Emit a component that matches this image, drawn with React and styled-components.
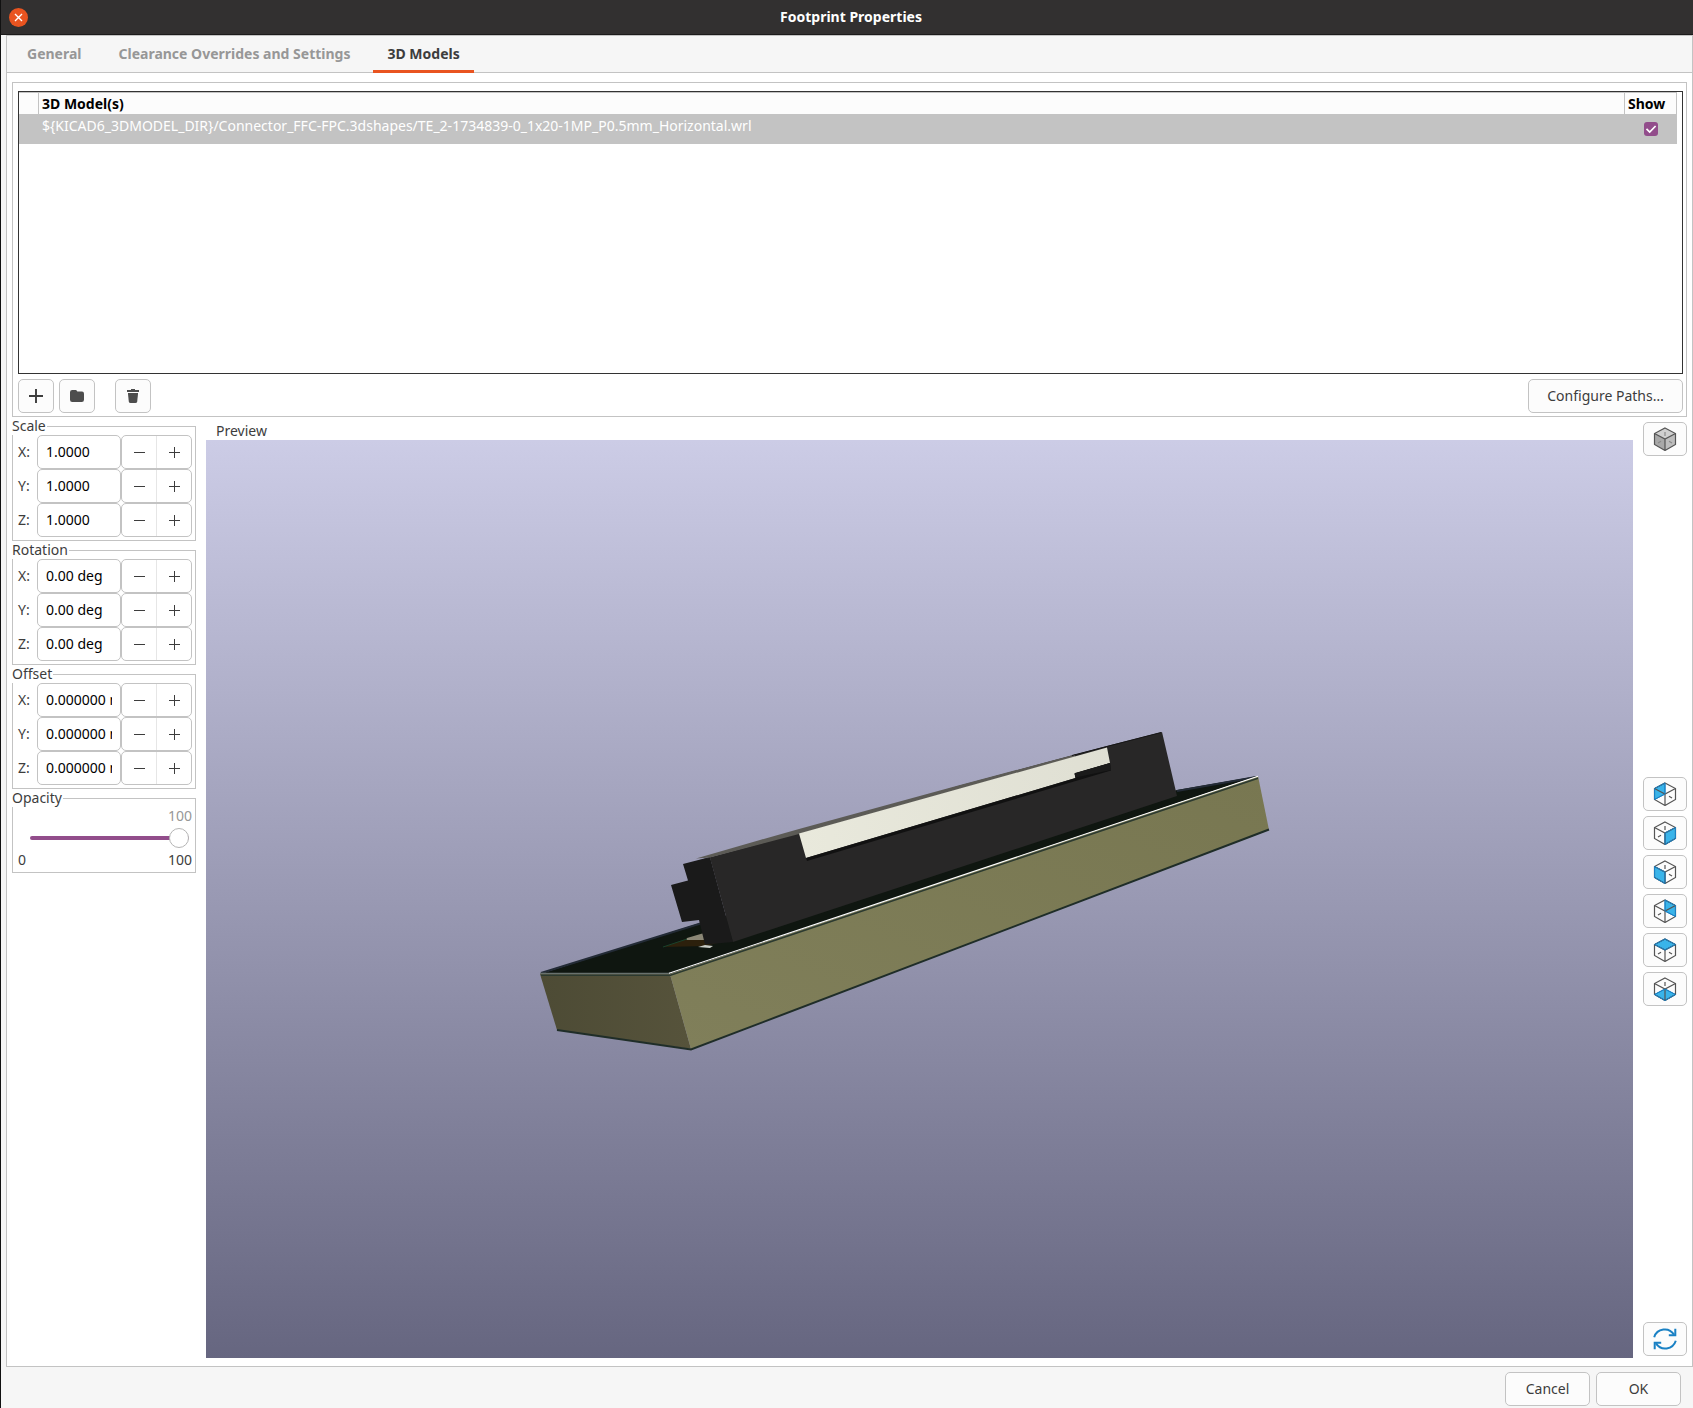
import React, { useState } from "react";
import styled, { createGlobalStyle, css } from "styled-components";

const GlobalStyle = createGlobalStyle`
  *, *::before, *::after {
    box-sizing: border-box;
  }
  body {
    margin: 0;
    color: #3d3d3d;
    background-color: #f6f6f6;
    font-family: "Noto Sans", "Open Sans", sans-serif;
    font-size: 14px;
    line-height: 18px;
  }
  button, input {
    color: inherit;
    font: inherit;
  }
`;

const Window = styled.div`
  display: flex;
  flex-direction: column;
  min-height: 100vh;
  border-left: 1px solid #111111;
`;
const TitleBar = styled.header`
  display: grid;
  grid-template-columns: 36px 1fr 28px;
  align-items: center;
  height: 35px;
  border-bottom: 1px solid #1c1b1b;
  background-color: #323030;
`;
const Title = styled.h1`
  margin: 0;
  color: #ffffff;
  font-size: 14px;
  font-weight: 700;
  text-align: center;
`;
const CloseButton = styled.button`
  display: flex;
  justify-content: center;
  align-items: center;
  width: 19px;
  height: 19px;
  margin-left: 8px;
  padding: 0;
  border: 0;
  border-radius: 50%;
  background-color: #e95420;
  color: #ffffff;
`;

const Notebook = styled.main`
  flex: 1;
  display: flex;
  flex-direction: column;
  margin-left: 5px;
  border: 1px solid #c3c3c3;
  background-color: #ffffff;
`;
const TabList = styled.div`
  display: flex;
  gap: 9px;
  height: 37px;
  padding-left: 6px;
  border-bottom: 1px solid #c3c3c3;
  background-color: #f6f6f6;
`;
const Tab = styled.button`
  height: 37px;
  padding: 2px 14px 0;
  border: 0;
  border-bottom: 3px solid ${(props) => (props.$active ? "#e95420" : "transparent")};
  background: none;
  color: ${(props) => (props.$active ? "#3d3d3d" : "#979797")};
  font-weight: 700;
`;
const Page = styled.section`
  flex: 1;
  display: flex;
  flex-direction: column;
  padding: 9px 5px 8px;
`;

const ModelsBox = styled.div`
  padding: 8px 3px 3px 5px;
  border: 1px solid #c3c3c3;
`;
const GridBox = styled.div`
  height: 283px;
  padding-right: 5px;
  border: 1px solid #333333;
`;
const ModelTable = styled.table`
  width: 100%;
  border-collapse: separate;
  border-spacing: 0;
  table-layout: fixed;
`;
const HeadCell = styled.th`
  width: ${(props) => props.$width || "auto"};
  height: 22px;
  padding: 0 3px;
  border-top: 1px solid #c3c3c3;
  border-right: 1px solid #c3c3c3;
  background-color: #fcfcfc;
  color: #000000;
  text-align: left;
`;
const Cell = styled.td`
  height: 30px;
  padding: 3px;
  background-color: #c3c3c3;
  color: #ffffff;
  vertical-align: top;
`;
const ShowCell = styled(Cell)`
  padding: 0;
  vertical-align: middle;
`;
const CheckBox = styled.input`
  display: block;
  appearance: none;
  width: 14px;
  height: 14px;
  margin: 0 auto;
  border-radius: 3px;
  background-color: #ffffff;
  &:checked {
    background: #924d8b
      url("data:image/svg+xml,%3Csvg xmlns='http://www.w3.org/2000/svg' viewBox='0 0 14 14'%3E%3Cpath d='M2.5 6.8L5.7 10L11.6 4' fill='none' stroke='white' stroke-width='1.7'/%3E%3C/svg%3E");
  }
`;

const buttonFace = css`
  display: flex;
  justify-content: center;
  align-items: center;
  height: 34px;
  padding: 0;
  border: 1px solid #c3c3c3;
  border-radius: 5px;
  background-color: #fcfcfc;
  cursor: pointer;
  &:hover {
    background-color: #ffffff;
  }
`;
const ButtonRow = styled.div`
  display: flex;
  gap: 5px;
  margin-top: 5px;
`;
const IconButton = styled.button`
  ${buttonFace}
  width: 36px;
  margin-left: ${(props) => (props.$apart ? "15px" : "0")};
`;
const ConfigureButton = styled.button`
  ${buttonFace}
  width: 155px;
  margin-left: auto;
`;

const Columns = styled.div`
  flex: 1;
  display: grid;
  grid-template-columns: 184px 1fr 44px;
  column-gap: 10px;
`;
const Settings = styled.div`
  display: flex;
  flex-direction: column;
  gap: 1px;
  padding-top: 1px;
`;
const Group = styled.fieldset`
  min-width: 0;
  margin: 0;
  padding: 0 3px 3px 5px;
  border: 1px solid #c3c3c3;
`;
const Legend = styled.legend`
  margin-left: -6px;
  padding: 0 1px 2px 0;
  background-color: #ffffff;
  line-height: 15px;
`;
const Field = styled.div`
  display: flex;
  align-items: center;
  height: 34px;
`;
const FieldLabel = styled.label`
  width: 19px;
  padding-bottom: 1px;
`;
const ValueInput = styled.input`
  flex: 1;
  min-width: 0;
  height: 34px;
  padding: 0 8px 1px;
  border: 1px solid #c3c3c3;
  border-radius: 5px;
  background-color: #ffffff;
  color: #000000;
`;
const Stepper = styled.div`
  display: flex;
  width: 71px;
  height: 34px;
  border: 1px solid #c3c3c3;
  border-radius: 5px;
`;
const StepButton = styled.button`
  flex: 1;
  display: flex;
  justify-content: center;
  align-items: center;
  padding: 0;
  border: 0;
  background: none;
  & + & {
    border-left: 1px solid #e6e6e6;
  }
`;

const OpacityValue = styled.output`
  display: block;
  color: #979797;
  text-align: right;
`;
const Slider = styled.input`
  display: block;
  appearance: none;
  width: calc(100% - 15px);
  height: 26px;
  margin: 0 3px 0 12px;
  background: none;
  &::-webkit-slider-runnable-track {
    height: 4px;
    border-radius: 2px;
    background-color: #924d8b;
  }
  &::-webkit-slider-thumb {
    appearance: none;
    width: 20px;
    height: 20px;
    margin-top: -8px;
    border: 1px solid #b5b5b5;
    border-radius: 50%;
    background-color: #ffffff;
  }
`;
const SliderEnds = styled.div`
  display: flex;
  justify-content: space-between;
`;

const PreviewColumn = styled.div`
  display: flex;
  flex-direction: column;
  padding-top: 5px;
`;
const PreviewTitle = styled.h2`
  margin: 0;
  padding-left: 10px;
  font-size: 14px;
  font-weight: 400;
  line-height: 18px;
`;
const Canvas = styled.div`
  flex: 1;
  display: flex;
  justify-content: center;
  align-items: center;
  min-height: 400px;
  background: linear-gradient(#cccce6, #666680);
`;
const Scene = styled.svg`
  width: 100%;
  height: auto;
`;

const ViewTools = styled.div`
  display: flex;
  flex-direction: column;
  justify-content: space-between;
  padding: 5px 0 2px;
`;
const ViewGroup = styled.div`
  display: flex;
  flex-direction: column;
  gap: 5px;
  padding-top: 5px;
`;
const ViewButton = styled.button`
  ${buttonFace}
  width: 44px;
`;

const Footer = styled.footer`
  display: flex;
  justify-content: flex-end;
  gap: 6px;
  padding: 5px 12px 2px;
`;
const DialogButton = styled.button`
  ${buttonFace}
  width: 85px;
`;

const PlusIcon = ({ size = 11, weight = 1 }) => (
  <svg width={size} height={size} viewBox="0 0 11 11" fill="none" stroke="#3d3d3d" strokeWidth={weight}>
    <path d="M0 5.5H11M5.5 0V11" />
  </svg>
);

const MinusIcon = () => (
  <svg width="11" height="11" viewBox="0 0 11 11" fill="none" stroke="#3d3d3d">
    <path d="M0 5.5H11" />
  </svg>
);

const FolderIcon = () => (
  <svg width="16" height="16" viewBox="0 0 16 16" fill="#4d4d4d">
    <path d="M1 4.2Q1 2 3.2 2H6.6Q7.6 2 8 3L8.3 3.6H13Q15 3.6 15 5.8V11.8Q15 14 12.8 14H3.2Q1 14 1 11.8Z" />
  </svg>
);

const TrashIcon = () => (
  <svg width="16" height="16" viewBox="0 0 16 16" fill="#4d4d4d">
    <path d="M2 2H6V1H10V2H14V4H2Z" />
    <path d="M3 5H13V6L12.2 13.4Q12 15 10.4 15H5.6Q4 15 3.8 13.4L3 6Z" />
  </svg>
);

const RefreshIcon = () => (
  <svg width="24" height="24" viewBox="0 0 24 24" fill="none" stroke="#1a81c4" strokeWidth="2">
    <path d="M1.2 10.2A11 11 0 0 1 21 7.6" />
    <path d="M22.3 1.8V8.3H15.8" />
    <path d="M22.8 13.8A11 11 0 0 1 3 16.4" />
    <path d="M1.7 22.2V15.7H8.2" />
  </svg>
);

// faces of an isometric cube, hidden ones share the centre point
const faces = {
  left: "12,12 12,1 1.5,6.5 1.5,17.5",
  right: "12,12 22.5,6.5 22.5,17.5 12,23.5",
  front: "12,12 1.5,6.5 1.5,17.5 12,23.5",
  back: "12,12 12,1 22.5,6.5 22.5,17.5",
  top: "12,12 1.5,6.5 12,1 22.5,6.5",
  bottom: "12,12 1.5,17.5 12,23.5 22.5,17.5",
};

const hiddenEdges = {
  up: "M12 5V9",
  downLeft: "M5 16L8 14.3",
  downRight: "M19 16L16 14.3",
};

const CubeIcon = ({ face, hidden }) => (
  <svg width="24" height="24" viewBox="0 0 24 24" fill="none" stroke="#545454" strokeWidth="1.2">
    {face && <polygon points={faces[face]} fill="#39b4ea" stroke="#1a81c4" strokeWidth="1" />}
    {!face && (
      <g stroke="none">
        <polygon points={faces.top} fill="#cfcfcf" />
        <polygon points={faces.front} fill="#a8a8a8" />
        <polygon points={faces.right} fill="#bdbdbd" />
      </g>
    )}
    <path d="M12 1L22.5 6.5V17.5L12 23.5L1.5 17.5V6.5ZM1.5 6.5L12 12L22.5 6.5M12 12V23.5" />
    {face && <polygon points={faces[face]} stroke="#1a81c4" strokeWidth="1" />}
    {hidden.map((edge) => (
      <path key={edge} d={hiddenEdges[edge]} stroke={face ? "#545454" : "#8a8a8a"} />
    ))}
  </svg>
);

const ConnectorScene = () => (
  <Scene viewBox="206 440 1427 918" role="img" aria-label="Connector on board">
    <defs>
      <linearGradient id="boardSide" x1="0" y1="1" x2="1" y2="0">
        <stop offset="0" stopColor="#807f5a" />
        <stop offset="1" stopColor="#787751" />
      </linearGradient>
      <linearGradient id="boardEnd" x1="0" x2="1">
        <stop offset="0" stopColor="#4d4b35" />
        <stop offset="1" stopColor="#56533b" />
      </linearGradient>
      <linearGradient id="actuator" x1="0" x2="1">
        <stop offset="0" stopColor="#e9e9dc" />
        <stop offset="1" stopColor="#dfdfd3" />
      </linearGradient>
    </defs>
    <polygon points="540,974 700,923 1177,790 1258,776 670,974" fill="#0f1610" />
    <path d="M541 973L702 923M1177 791L1256 777" stroke="#232b36" strokeWidth="2" />
    <polygon points="540,974 670,974 691,1049 557,1030" fill="url(#boardEnd)" />
    <polygon points="670,974 1258,776 1269,830 691,1049" fill="url(#boardSide)" />
    <path d="M557 1030L691 1049.5L1269 829.5" fill="none" stroke="#1f2d28" strokeWidth="2" />
    <path d="M541 975.3H670.5L1258 778.3" fill="none" stroke="#2c3a30" strokeWidth="1.6" />
    <path d="M540 973.5H670" stroke="#68716d" strokeWidth="1.6" />
    <path d="M669 973.3L1258 776.3" stroke="#ffffff" strokeWidth="1.1" />
    <polygon points="663,947 688,938 706,938 717,943 706,946" fill="#2c200c" />
    <polygon points="686,940 687,938 704,933 704,940" fill="#8b8776" />
    <path d="M663 947L687 939" stroke="#17412b" />
    <polygon points="683,864 710,857 733,942 705,944.5 699,920 682,922 671,885 688,880.5" fill="#1a1a1a" />
    <polygon points="698,947 705,945 713,946 710,948" fill="#c9ccc6" />
    <polygon points="700,860 799,833 960,785.5 1107,746 1162,732 1177,796 733,942 710,858" fill="#282727" />
    <polygon points="696,858.5 760,840 799,829 960,785 1075,754.5 1075,757 960,789 799,834 710,857.5" fill="#5c5b56" />
    <path d="M1072 755.5L1161 732.5" stroke="#161616" />
    <polygon points="799,833.5 960,788.5 1107,747.5 1110,763 1075,773 1075.5,778 806,858" fill="url(#actuator)" />
    <polygon points="1074.5,773.5 1110,763 1111,770.5 807,861 806,858 1075.5,778" fill="#111111" />
    <polygon points="1074.5,773.5 1110,763 1111,770 1075.5,777.5" fill="#1a1a1a" />
  </Scene>
);

const groups = [
  { name: "Scale", value: "1.0000" },
  { name: "Rotation", value: "0.00 deg" },
  { name: "Offset", value: "0.000000 mm" },
];

const views = [
  { face: "left", hidden: ["downRight"] },
  { face: "right", hidden: ["up", "downLeft"] },
  { face: "front", hidden: ["up", "downRight"] },
  { face: "back", hidden: ["downLeft"] },
  { face: "top", hidden: ["downLeft", "downRight"] },
  { face: "bottom", hidden: ["up"] },
];

const tabs = ["General", "Clearance Overrides and Settings", "3D Models"];

const SpinField = ({ id, axis, value }) => (
  <Field>
    <FieldLabel htmlFor={id}>{axis}:</FieldLabel>
    <ValueInput id={id} defaultValue={value} />
    <Stepper>
      <StepButton type="button" aria-label={`Decrease ${axis}`}>
        <MinusIcon />
      </StepButton>
      <StepButton type="button" aria-label={`Increase ${axis}`}>
        <PlusIcon />
      </StepButton>
    </Stepper>
  </Field>
);

const App = () => {
  const [tab, setTab] = useState("3D Models");
  const [show, setShow] = useState(true);
  const [opacity, setOpacity] = useState(100);

  return (
    <Window>
      <GlobalStyle />
      <TitleBar>
        <CloseButton type="button" aria-label="Close">
          <svg width="9" height="9" viewBox="0 0 9 9" stroke="currentColor" strokeWidth="1.4">
            <path d="M1 1L8 8M8 1L1 8" />
          </svg>
        </CloseButton>
        <Title>Footprint Properties</Title>
      </TitleBar>

      <Notebook>
        <TabList role="tablist">
          {tabs.map((name) => (
            <Tab
              key={name}
              type="button"
              role="tab"
              aria-selected={tab === name}
              $active={tab === name}
              onClick={() => setTab(name)}
            >
              {name}
            </Tab>
          ))}
        </TabList>

        <Page>
          <ModelsBox>
            <GridBox>
              <ModelTable>
                <thead>
                  <tr>
                    <HeadCell $width="20px" aria-label="Status" />
                    <HeadCell>3D Model(s)</HeadCell>
                    <HeadCell $width="52px">Show</HeadCell>
                  </tr>
                </thead>
                <tbody>
                  <tr>
                    <Cell />
                    <Cell>
                      {"${KICAD6_3DMODEL_DIR}/Connector_FFC-FPC.3dshapes/TE_2-1734839-0_1x20-1MP_P0.5mm_Horizontal.wrl"}
                    </Cell>
                    <ShowCell>
                      <CheckBox
                        type="checkbox"
                        aria-label="Show"
                        checked={show}
                        onChange={(e) => setShow(e.target.checked)}
                      />
                    </ShowCell>
                  </tr>
                </tbody>
              </ModelTable>
            </GridBox>
            <ButtonRow>
              <IconButton type="button" aria-label="Add model">
                <PlusIcon size={14} weight={1.5} />
              </IconButton>
              <IconButton type="button" aria-label="Browse">
                <FolderIcon />
              </IconButton>
              <IconButton type="button" aria-label="Delete" $apart>
                <TrashIcon />
              </IconButton>
              <ConfigureButton type="button">Configure Paths…</ConfigureButton>
            </ButtonRow>
          </ModelsBox>

          <Columns>
            <Settings>
              {groups.map((group) => (
                <Group key={group.name}>
                  <Legend>{group.name}</Legend>
                  {["X", "Y", "Z"].map((axis) => (
                    <SpinField key={axis} id={`${group.name}-${axis}`} axis={axis} value={group.value} />
                  ))}
                </Group>
              ))}
              <Group>
                <Legend>Opacity</Legend>
                <OpacityValue htmlFor="opacity">{opacity}</OpacityValue>
                <Slider
                  id="opacity"
                  type="range"
                  aria-label="Opacity"
                  min="0"
                  max="100"
                  value={opacity}
                  onChange={(e) => setOpacity(Number(e.target.value))}
                />
                <SliderEnds>
                  <span>0</span>
                  <span>100</span>
                </SliderEnds>
              </Group>
            </Settings>

            <PreviewColumn>
              <PreviewTitle>Preview</PreviewTitle>
              <Canvas>
                <ConnectorScene />
              </Canvas>
            </PreviewColumn>

            <ViewTools>
              <ViewButton type="button" aria-label="Orthographic view">
                <CubeIcon hidden={["up", "downLeft", "downRight"]} />
              </ViewButton>
              <ViewGroup>
                {views.map((view) => (
                  <ViewButton key={view.face} type="button" aria-label={`View ${view.face}`}>
                    <CubeIcon face={view.face} hidden={view.hidden} />
                  </ViewButton>
                ))}
              </ViewGroup>
              <ViewButton type="button" aria-label="Reload">
                <RefreshIcon />
              </ViewButton>
            </ViewTools>
          </Columns>
        </Page>
      </Notebook>

      <Footer>
        <DialogButton type="button">Cancel</DialogButton>
        <DialogButton type="button">OK</DialogButton>
      </Footer>
    </Window>
  );
};

export default App;
